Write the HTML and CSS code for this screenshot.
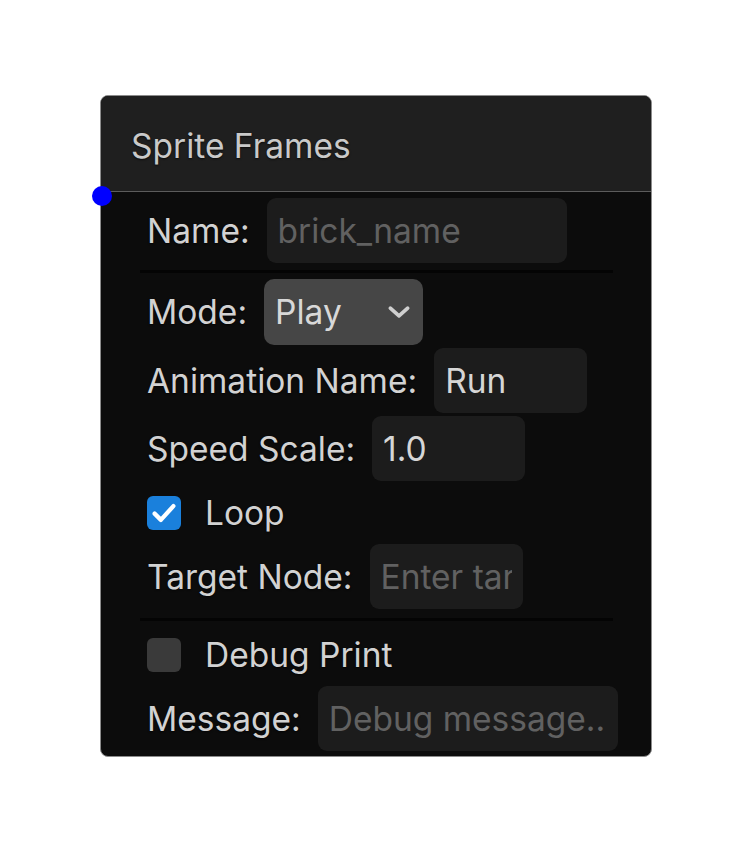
FILE: index.html
```html
<!DOCTYPE html>
<html lang="en">
<head>
<meta charset="UTF-8">
<meta name="viewport" content="width=device-width, initial-scale=1.0">
<title>Sprite Frames Node</title>
<link rel="stylesheet" href="styles.css">
</head>
<body>
<div class="node">
  <div class="node-header">Sprite Frames</div>
  <span class="port"></span>
  <div class="node-body">
    <div class="field">
      <label class="field-label">Name:</label>
      <input class="text-input wide" type="text" placeholder="brick_name">
    </div>
    <hr class="sep sep-top">
    <div class="field">
      <label class="field-label">Mode:</label>
      <div class="select">
        <span>Play</span>
        <svg class="chevron" viewBox="0 0 24 24" width="26" height="26">
          <path d="M4 8.5 L12 15.5 L20 8.5" fill="none" stroke="#cfcfcf" stroke-width="3.4" stroke-linecap="round" stroke-linejoin="round"/>
        </svg>
      </div>
    </div>
    <div class="field">
      <label class="field-label">Animation Name:</label>
      <input class="text-input" type="text" value="Run">
    </div>
    <div class="field">
      <label class="field-label">Speed Scale:</label>
      <input class="text-input" type="text" value="1.0">
    </div>
    <div class="field check-row">
      <span class="checkbox checked">
        <svg viewBox="0 0 24 24" width="30" height="30">
          <path d="M4.5 12.5 L9.5 17.5 L19.5 6.5" fill="none" stroke="#ffffff" stroke-width="3.4" stroke-linecap="round" stroke-linejoin="round"/>
        </svg>
      </span>
      <span class="check-label">Loop</span>
    </div>
    <div class="field">
      <label class="field-label">Target Node:</label>
      <input class="text-input" type="text" placeholder="Enter target node">
    </div>
    <hr class="sep sep-bottom">
    <div class="field check-row">
      <span class="checkbox"></span>
      <span class="check-label">Debug Print</span>
    </div>
    <div class="field">
      <label class="field-label">Message:</label>
      <input class="text-input wide" type="text" placeholder="Debug message...">
    </div>
  </div>
</div>
</body>
</html>
```
FILE: styles.css
```css
body {
  margin: 0;
  background-color: #ffffff;
  font-family: Inter, "Noto Sans", sans-serif;
}

.node {
  position: relative;
  width: 550px;
  margin: 95px 0 0 100px;
  border: 1px solid #8c8c8c;
  border-radius: 8px;
  background: #0c0c0c;
  color: #d2d2d2;
  font-size: 33.5px;
}

.node-header {
  box-sizing: border-box;
  height: 96px;
  padding: 4px 0 0 30px;
  display: flex;
  align-items: center;
  background: #1f1f1f;
  border-bottom: 1px solid #5c5c5c;
  border-radius: 7px 7px 0 0;
  color: #c9c9c9;
  text-shadow: 0 1px 2px rgba(0, 0, 0, 0.7);
}

.port {
  position: absolute;
  left: -9px;
  top: 90px;
  width: 20px;
  height: 20px;
  border-radius: 50%;
  background: #0000ff;
}

.node-body {
  display: flex;
  flex-direction: column;
  gap: 3px;
  padding: 6px 38px 5px 39px;
}

.field {
  display: flex;
  align-items: center;
  gap: 17px;
  padding-left: 7px;
  min-height: 65px;
}

.field-label {
  flex-shrink: 0;
  white-space: nowrap;
  text-shadow: 0 1px 2px rgba(0, 0, 0, 0.7);
}

.text-input {
  flex-shrink: 0;
  box-sizing: border-box;
  width: 153px;
  height: 65px;
  padding: 0 11px;
  border: none;
  border-radius: 9px;
  outline: none;
  background: #1c1c1c;
  color: #d6d6d6;
  font-family: inherit;
  font-size: 33.5px;
}

.text-input.wide {
  width: 300px;
}

.text-input::placeholder {
  color: #616161;
}

.select {
  flex-shrink: 0;
  box-sizing: border-box;
  width: 159px;
  height: 66px;
  padding: 0 11px 0 11px;
  display: flex;
  align-items: center;
  justify-content: space-between;
  border-radius: 10px;
  background: #464646;
  color: #d8d8d8;
}

.sep {
  margin: 4px 0 3px;
  height: 3px;
  border: none;
  background: #040404;
}

.sep-bottom {
  margin: 6px 0 2px;
}

.check-row {
  min-height: 57px;
  gap: 24px;
}

.checkbox {
  box-sizing: border-box;
  width: 34px;
  height: 34px;
  display: flex;
  align-items: center;
  justify-content: center;
  border-radius: 6px;
  background: #3a3a3a;
}

.checkbox.checked {
  background: #1a80dc;
}

.check-label {
  text-shadow: 0 1px 2px rgba(0, 0, 0, 0.7);
}
```
